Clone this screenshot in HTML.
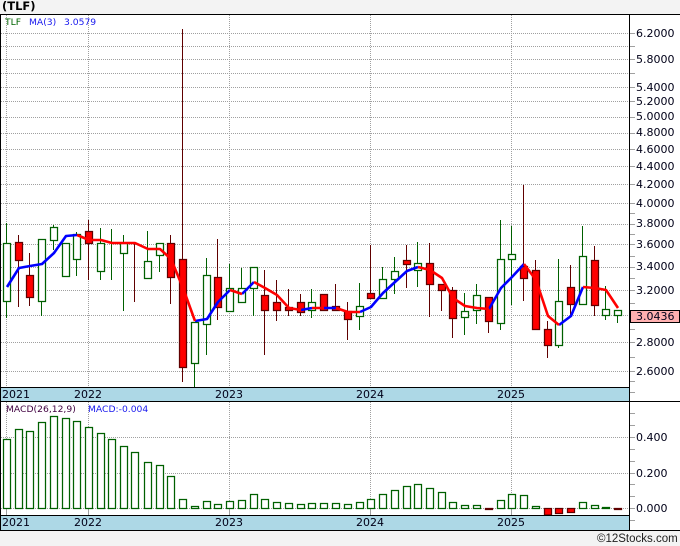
<!DOCTYPE html>
<html><head><meta charset="utf-8"><title>TLF</title>
<style>
html,body{margin:0;padding:0;background:#f3f3f3}
svg{display:block}
text{font-family:"DejaVu Sans",sans-serif;font-size:11px;fill:#000018}
</style></head><body>
<svg width="680" height="546" viewBox="0 0 680 546" xmlns="http://www.w3.org/2000/svg">
<rect width="680" height="546" fill="#f3f3f3"/>
<rect x="0" y="14" width="680" height="517" fill="#fff"/>
<rect x="1" y="388" width="628" height="13" fill="#add8e6"/>
<rect x="1" y="516" width="628" height="14" fill="#add8e6"/>
<g shape-rendering="crispEdges">
<path fill="none" stroke="#a0a0a0" stroke-dasharray="1 1" d="M1 33.5H629M1 46.5H629M1 59.5H629M1 73.5H629M1 87.5H629M1 101.5H629M1 117.5H629M1 133.5H629M1 149.5H629M1 166.5H629M1 184.5H629M1 203.5H629M1 224.5H629M1 244.5H629M1 267.5H629M1 290.5H629M1 315.5H629M1 342.5H629M1 371.5H629M1 437.5H629M1 473.5H629M1 508.5H629M6.5 15V387M88.5 15V387M229.5 15V387M370.5 15V387M511.5 15V387M6.5 402V508M88.5 402V508M229.5 402V508M370.5 402V508M511.5 402V508"/>
<path fill="none" stroke="#a0a0a0" d="M6.5 508V515M88.5 508V515M229.5 508V515M370.5 508V515M511.5 508V515M630 33.5h5M630 46.5h5M630 59.5h5M630 73.5h5M630 87.5h5M630 101.5h5M630 117.5h5M630 133.5h5M630 149.5h5M630 166.5h5M630 184.5h5M630 203.5h5M630 213.5h5M630 224.5h5M630 234.5h5M630 244.5h5M630 256.5h5M630 267.5h5M630 278.5h5M630 290.5h5M630 303.5h5M630 329.5h5M630 342.5h5M630 357.5h5M630 371.5h5M630 381.5h5M630 392.5h5M630 413.5h5M630 425.5h5M630 437.5h5M630 449.5h5M630 461.5h5M630 473.5h5M630 484.5h5M630 496.5h5M630 508.5h5M630 520.5h5"/>
<path fill="none" stroke="#006000" d="M6.5 223V318M41.5 239V316M53.5 225V250M65.5 243V276M76.5 232V276M100.5 228V280M111.5 229V280M123.5 235V311M147.5 231V278M159.5 243V272M194.5 322V387M206.5 258V355M229.5 264V311M241.5 268V302M253.5 267V316M311.5 289V318M359.5 283V330M382.5 267V298M394.5 257V294M417.5 242V287M464.5 293V335M476.5 284V324M500.5 220V330M511.5 226V305M558.5 259V348M582.5 226V304M605.5 286V320M617.5 310V323"/>
<path fill="none" stroke="#600000" d="M18.5 235V307M29.5 253V306M88.5 220V280M134.5 243V302M170.5 235V304M182.5 29V382M217.5 239V320M264.5 270V355M276.5 280V321M288.5 289V316M300.5 294V316M323.5 294V310M335.5 284V311M347.5 302V340M370.5 245V298M406.5 245V288M429.5 243V317M441.5 284V311M452.5 287V338M488.5 297V333M523.5 185V301M535.5 260V329M547.5 321V358M570.5 265V316M594.5 246V316"/>
<g shape-rendering="auto" stroke-width="1.25">
<path fill="#fff" stroke="#006000" d="M3.5 243.5h7v58h-7zM38.5 239.5h7v62h-7zM50.5 227.5h7v13h-7zM62.5 243.5h7v33h-7zM73.5 234.5h7v25h-7zM97.5 243.5h7v28h-7zM120.5 243.5h7v10h-7zM144.5 261.5h7v17h-7zM156.5 243.5h7v12h-7zM191.5 322.5h7v41h-7zM203.5 275.5h7v49h-7zM226.5 288.5h7v23h-7zM238.5 288.5h7v14h-7zM250.5 267.5h7v21h-7zM308.5 302.5h7v8h-7zM356.5 306.5h7v10h-7zM379.5 279.5h7v19h-7zM391.5 271.5h7v8h-7zM414.5 263.5h7v7h-7zM461.5 311.5h7v6h-7zM473.5 295.5h7v15h-7zM497.5 259.5h7v64h-7zM508.5 254.5h7v5h-7zM555.5 301.5h7v44h-7zM579.5 256.5h7v48h-7zM602.5 309.5h7v6h-7zM614.5 310.5h7v5h-7z"/>
<path fill="#f00" stroke="#600000" d="M15.5 242.5h7v18h-7zM26.5 275.5h7v22h-7zM85.5 231.5h7v12h-7zM167.5 243.5h7v34h-7zM179.5 259.5h7v108h-7zM214.5 277.5h7v30h-7zM261.5 295.5h7v15h-7zM273.5 302.5h7v8h-7zM285.5 307.5h7v3h-7zM297.5 302.5h7v10h-7zM320.5 294.5h7v16h-7zM332.5 306.5h7v4h-7zM344.5 311.5h7v8h-7zM367.5 293.5h7v5h-7zM403.5 260.5h7v4h-7zM426.5 263.5h7v21h-7zM438.5 284.5h7v6h-7zM449.5 290.5h7v28h-7zM485.5 297.5h7v24h-7zM520.5 266.5h7v12h-7zM532.5 270.5h7v59h-7zM544.5 329.5h7v16h-7zM567.5 287.5h7v17h-7zM591.5 260.5h7v45h-7z"/>
<path fill="#fff" stroke="#006000" d="M3.5 439.5h7V508.5h-7zM15.5 429.5h7V508.5h-7zM26.5 431.5h7V508.5h-7zM38.5 422.5h7V508.5h-7zM50.5 416.5h7V508.5h-7zM62.5 418.5h7V508.5h-7zM73.5 421.5h7V508.5h-7zM85.5 427.5h7V508.5h-7zM97.5 433.5h7V508.5h-7zM108.5 439.5h7V508.5h-7zM120.5 446.5h7V508.5h-7zM131.5 452.5h7V508.5h-7zM144.5 462.5h7V508.5h-7zM156.5 465.5h7V508.5h-7zM167.5 476.5h7V508.5h-7zM179.5 499.5h7V508.5h-7zM191.5 506.5h7V508.5h-7zM203.5 501.5h7V508.5h-7zM214.5 504.5h7V508.5h-7zM226.5 501.5h7V508.5h-7zM238.5 500.5h7V508.5h-7zM250.5 494.5h7V508.5h-7zM261.5 499.5h7V508.5h-7zM273.5 502.5h7V508.5h-7zM285.5 503.5h7V508.5h-7zM297.5 504.5h7V508.5h-7zM308.5 503.5h7V508.5h-7zM320.5 503.5h7V508.5h-7zM332.5 503.5h7V508.5h-7zM344.5 504.5h7V508.5h-7zM356.5 502.5h7V508.5h-7zM367.5 499.5h7V508.5h-7zM379.5 494.5h7V508.5h-7zM391.5 490.5h7V508.5h-7zM403.5 486.5h7V508.5h-7zM414.5 484.5h7V508.5h-7zM426.5 488.5h7V508.5h-7zM438.5 492.5h7V508.5h-7zM449.5 502.5h7V508.5h-7zM461.5 505.5h7V508.5h-7zM473.5 505.5h7V508.5h-7zM497.5 500.5h7V508.5h-7zM508.5 494.5h7V508.5h-7zM520.5 495.5h7V508.5h-7zM532.5 506.5h7V508.5h-7zM579.5 502.5h7V508.5h-7zM591.5 505.5h7V508.5h-7zM602.5 507.5h7V508.5h-7z"/>
<path fill="#f00" stroke="#600000" d="M485.5 508.5h7V509.5h-7zM544.5 508.5h7V515h-7zM555.5 508.5h7V513.5h-7zM567.5 508.5h7V512.5h-7zM614.5 508.5h7V509.5h-7z"/>
</g>
</g>
<g fill="none" stroke-width="2.6" stroke-linejoin="round">
<path stroke="#0000ff" d="M7 287L19 268 30 266 42 264 54 253 66 236 77 235M195 321L207 319 218 302 230 290M242 294L254 282M301 310L312 308M324 308L336 308M360 312L371 307 383 293 395 282 407 271 418 267M489 309L501 288 512 277 524 264M559 325L571 316 583 287"/>
<path stroke="#ff0000" d="M77 235L89 240 101 240 112 243 124 243 135 243 148 249 160 249 171 259 183 288 195 321M230 290L242 294M254 282L265 288 277 295 289 308 301 310M312 308L324 308M336 308L348 312 360 312M418 267L430 270 442 278 453 298 465 306 477 308 489 309M524 264L536 280 548 316 559 325M583 287L595 288 606 290 618 308"/>
</g>
<g shape-rendering="crispEdges" fill="none" stroke="#000">
<path d="M0 14.5H680M0.5 14V531M629.5 14V531M0 387.5H629M0 401.5H680M0 515.5H629M0 530.5H680"/>
</g>
<rect x="630.5" y="310.5" width="49" height="12" fill="#ffb0b0" stroke="#000" shape-rendering="crispEdges"/>
<text x="2" y="10" style="font-weight:bold;font-size:11.5px;fill:#000">(TLF)</text>
<text x="5" y="25" style="font-size:9.2px;fill:#006400">TLF</text>
<text x="29" y="25" style="font-size:9.2px;fill:#1818ee">MA(3)</text>
<text x="64" y="25" style="font-size:9.2px;fill:#1818ee">3.0579</text>
<text x="6" y="412" style="font-size:9.2px;fill:#400040">MACD(26,12,9)</text>
<text x="88" y="412" style="font-size:9.2px;fill:#1818ee">MACD:-0.004</text>
<text x="636" y="37">6.2000</text>
<text x="636" y="63">5.8000</text>
<text x="636" y="91">5.4000</text>
<text x="636" y="105">5.2000</text>
<text x="636" y="120">5.0000</text>
<text x="636" y="136">4.8000</text>
<text x="636" y="153">4.6000</text>
<text x="636" y="170">4.4000</text>
<text x="636" y="188">4.2000</text>
<text x="636" y="207">4.0000</text>
<text x="636" y="227">3.8000</text>
<text x="636" y="248">3.6000</text>
<text x="636" y="270">3.4000</text>
<text x="636" y="294">3.2000</text>
<text x="636" y="320">3.0436</text>
<text x="636" y="346">2.8000</text>
<text x="636" y="375">2.6000</text>
<text x="636" y="441">0.400</text>
<text x="636" y="477">0.200</text>
<text x="636" y="512">0.000</text>
<text x="2" y="398">2021</text><text x="74" y="398">2022</text><text x="215" y="398">2023</text><text x="356" y="398">2024</text><text x="497" y="398">2025</text>
<text x="2" y="526">2021</text><text x="74" y="526">2022</text><text x="215" y="526">2023</text><text x="356" y="526">2024</text><text x="497" y="526">2025</text>
<text x="597" y="542" style="font-family:'Liberation Sans',sans-serif;font-size:11.5px;fill:#222">©12Stocks.com</text>
</svg>
</body></html>
